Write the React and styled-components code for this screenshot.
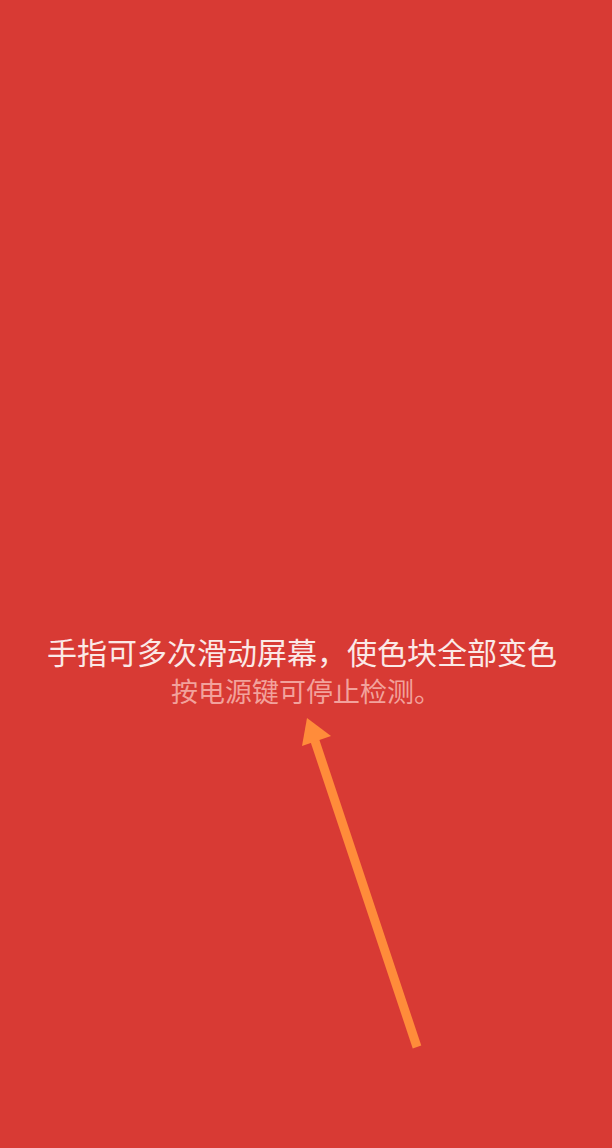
import React from 'react'
import styled, { createGlobalStyle } from 'styled-components';

const GlobalStyle = createGlobalStyle`
    html, body {
        margin: 0;
        padding: 0;
        background: #d83a34;
    }
`;

const Screen = styled.div`
    position: relative;
    width: 612px;
    height: 1148px;
    background-color: #d83a34;
    display: flex;
    flex-direction: column;
    align-items: center;
    padding: 631px 8px 0 0;
    box-sizing: border-box;
    font-family: "Noto Sans CJK SC", "Noto Sans", sans-serif;
    overflow: hidden;
`;

const Title = styled.div`
    color: #fbe9e7;
    font-size: 30px;
    line-height: 40px;
    white-space: nowrap;
`;

const Hint = styled.div`
    color: #f2a29c;
    font-size: 27px;
    line-height: 36px;
    margin-top: 2px;
    padding-left: 8px;
    white-space: nowrap;
`;

const Arrow = styled.svg`
    position: absolute;
    left: 0;
    top: 0;
    pointer-events: none;
`;

function App() {
    return (
        <>
            <GlobalStyle />
            <Screen>
                <Title>手指可多次滑动屏幕，使色块全部变色</Title>
                <Hint>按电源键可停止检测。</Hint>
                <Arrow width="612" height="1148" viewBox="0 0 612 1148">
                    <line x1="417" y1="1047" x2="313" y2="735" stroke="#ff8c3a" strokeWidth="9" />
                    <polygon points="307,718 331,736 302,746" fill="#ff8c3a" />
                </Arrow>
            </Screen>
        </>
    )
}

export default App;
